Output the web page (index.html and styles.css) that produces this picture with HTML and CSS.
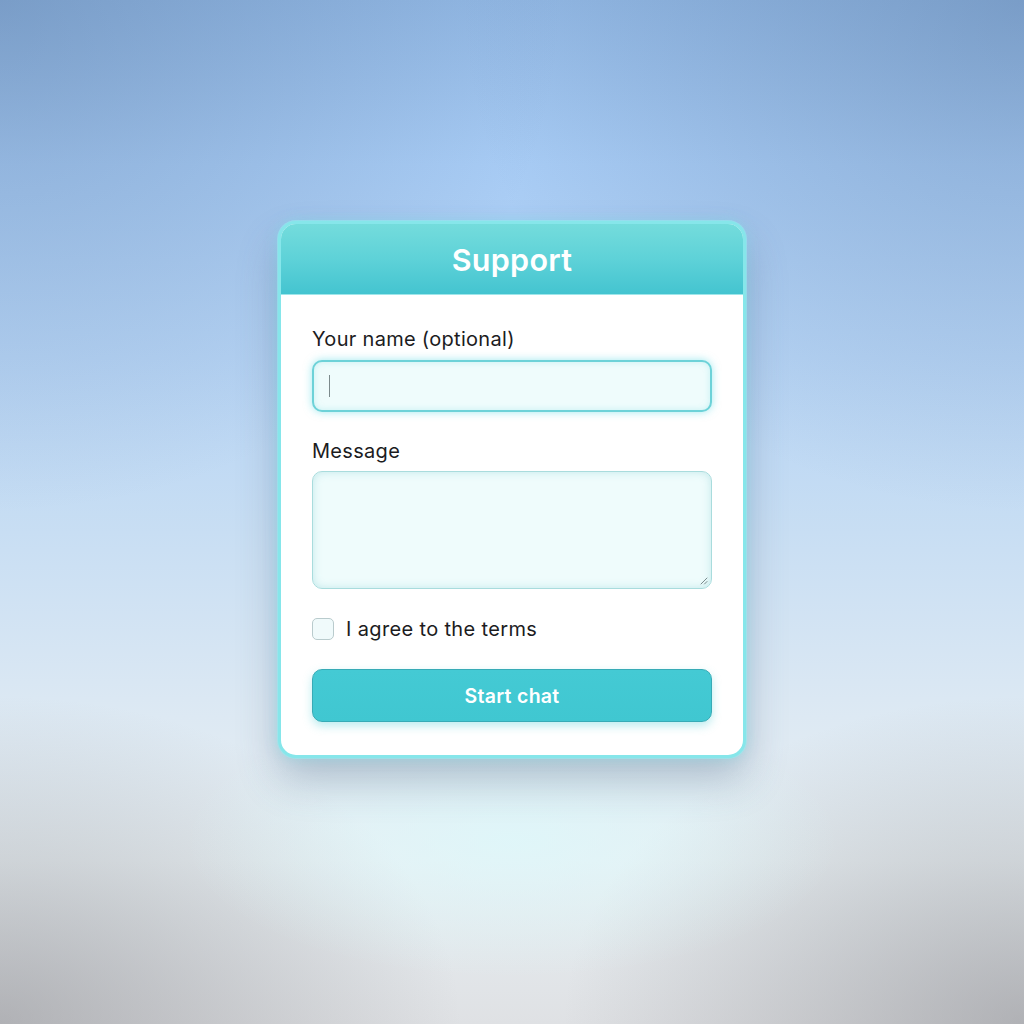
FILE: index.html
```html
<!DOCTYPE html>
<html lang="en">
<head>
<meta charset="utf-8">
<title>Support</title>
<link rel="stylesheet" href="styles.css">
</head>
<body>
<div class="glow"></div>
<form class="card">
  <div class="card-header">Support</div>
  <div class="card-body">
    <label class="label" for="name">Your name (optional)</label>
    <div class="input name-input"><span class="caret"></span></div>
    <label class="label label-msg" for="msg">Message</label>
    <div class="input textarea">
      <svg class="grip" viewBox="0 0 8 8" width="8" height="8"><path d="M7 1 L1 7 M7 4.5 L4.5 7" stroke="#7a8a8c" stroke-width="1" fill="none" stroke-linecap="round"/></svg>
    </div>
    <div class="check-row">
      <span class="checkbox"></span>
      <span class="check-label">I agree to the terms</span>
    </div>
    <button type="button" class="btn">Start chat</button>
  </div>
</form>
</body>
</html>
```
FILE: styles.css
```css
html, body {
  margin: 0;
  padding: 0;
}
body {
  width: 1024px;
  height: 1024px;
  box-sizing: border-box;
  padding-top: 221px;
  display: flex;
  justify-content: center;
  align-items: flex-start;
  font-family: Inter, "Noto Sans", "Liberation Sans", sans-serif;
  position: relative;
  overflow: hidden;
  background:
    radial-gradient(ellipse 55% 50% at 0% 0%, rgba(70,100,140,0.32) 0%, rgba(70,100,140,0) 100%),
    radial-gradient(ellipse 55% 50% at 100% 0%, rgba(70,100,140,0.32) 0%, rgba(70,100,140,0) 100%),
    radial-gradient(ellipse 45% 32% at 0% 100%, rgba(130,130,135,0.5) 0%, rgba(130,130,135,0) 100%),
    radial-gradient(ellipse 45% 32% at 100% 100%, rgba(130,130,135,0.5) 0%, rgba(130,130,135,0) 100%),
    linear-gradient(180deg, #92b8e4 0%, #a8ccf5 16%, #b6d4f5 35%, #c8def3 52%, #dde9f3 70%, #e8eff3 84%, #dfe1e4 100%);
}
.glow {
  position: absolute;
  left: 180px;
  top: 700px;
  width: 664px;
  height: 280px;
  border-radius: 50%;
  background: radial-gradient(ellipse at center, rgba(220,249,251,0.7) 0%, rgba(220,249,251,0.3) 40%, rgba(220,249,251,0) 70%);
  pointer-events: none;
}
.card {
  position: relative;
  width: 468px;
  box-sizing: border-box;
  border: 3px solid #86e6ea;
  border-radius: 18px;
  background: #fff;
  overflow: hidden;
  margin: 0;
  box-shadow:
    0 0 0 1px rgba(150,235,240,0.6),
    0 0 14px rgba(120,225,235,0.45),
    0 22px 40px rgba(70,90,120,0.32);
}
.card-header {
  height: 71px;
  display: flex;
  align-items: center;
  justify-content: center;
  color: #fff;
  font-size: 30.5px;
  font-weight: 600;
  letter-spacing: 0.3px;
  background: linear-gradient(180deg, #74dcdc 0%, #5ed2d8 50%, #44c4d0 100%);
  border-bottom: 1px solid #9fe6ea;
  box-sizing: border-box;
}
.card-body {
  padding: 32px 31px 33px 31px;
  display: flex;
  flex-direction: column;
}
.label {
  display: block;
  font-size: 20px;
  line-height: 24px;
  letter-spacing: 0.3px;
  color: #1c1c1e;
  margin-bottom: 9px;
}
.label-msg {
  margin-top: 27px;
  margin-bottom: 8px;
}
.input {
  box-sizing: border-box;
  border-radius: 10px;
  background: #effcfc;
  position: relative;
}
.name-input {
  height: 52px;
  border: 2px solid #6dd2d8;
  box-shadow: 0 0 9px rgba(80,215,225,0.55), inset 0 0 6px rgba(120,220,225,0.35);
  display: flex;
  align-items: center;
  padding-left: 15px;
}
.caret {
  width: 1px;
  height: 22px;
  background: #7c8a8c;
}
.textarea {
  height: 118px;
  border: 1.5px solid #a9dcdd;
  box-shadow: inset 0 0 9px rgba(140,210,215,0.45);
}
.grip {
  position: absolute;
  right: 3px;
  bottom: 3px;
}
.check-row {
  margin-top: 28px;
  height: 24px;
  display: flex;
  align-items: center;
  gap: 12px;
}
.checkbox {
  width: 22px;
  height: 22px;
  box-sizing: border-box;
  border: 1.5px solid #b9cbcd;
  border-radius: 5px;
  background: #f0fafb;
}
.check-label {
  font-size: 20px;
  letter-spacing: 0.35px;
  color: #1c1c1e;
}
.btn {
  margin-top: 28px;
  height: 53px;
  border: 1px solid #37abb6;
  border-radius: 10px;
  background: linear-gradient(180deg, #44cad4 0%, #40c7d1 100%);
  color: #fff;
  font-family: Inter, "Noto Sans", "Liberation Sans", sans-serif;
  font-size: 19.5px;
  font-weight: 600;
  letter-spacing: 0.3px;
  box-shadow: 0 4px 10px rgba(60,200,210,0.35);
  cursor: pointer;
}
```
